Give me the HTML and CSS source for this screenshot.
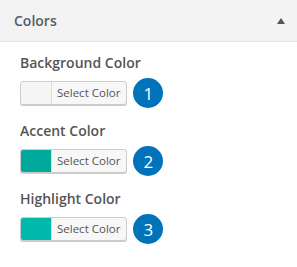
FILE: index.html
```html
<!DOCTYPE html>
<html lang="en">
<head>
  <meta charset="UTF-8">
  <title>Colors</title>
  <link rel="stylesheet" href="styles.css">
</head>
<body>
  <div class="section-title">
    <h3>Colors</h3>
    <span class="toggle"></span>
  </div>

  <ul class="controls">
    <li class="control">
      <span class="label">Background Color</span>
      <div class="picker-row">
        <button class="color-result"><span class="swatch swatch-bg"></span><span class="btn-text">Select Color</span></button>
        <span class="badge">1</span>
      </div>
    </li>
    <li class="control">
      <span class="label">Accent Color</span>
      <div class="picker-row">
        <button class="color-result"><span class="swatch swatch-accent"></span><span class="btn-text">Select Color</span></button>
        <span class="badge">2</span>
      </div>
    </li>
    <li class="control">
      <span class="label">Highlight Color</span>
      <div class="picker-row">
        <button class="color-result"><span class="swatch swatch-highlight"></span><span class="btn-text">Select Color</span></button>
        <span class="badge">3</span>
      </div>
    </li>
  </ul>
</body>
</html>
```

FILE: styles.css
```css
body {
  margin: 0;
  font-family: "Open Sans", Arial, sans-serif;
  background: #fff;
  color: #555d66;
}
.section-title {
  display: flex;
  align-items: center;
  justify-content: space-between;
  height: 41px;
  padding: 0 12px 0 14px;
  background: #f3f3f3;
  border-bottom: 1px solid #e4e4e4;
}
.section-title h3 {
  margin: 0;
  font-size: 14px;
  font-weight: 600;
  color: #555d66;
}
.toggle {
  width: 0;
  height: 0;
  border-left: 4px solid transparent;
  border-right: 4px solid transparent;
  border-bottom: 6px solid #555;
}
.controls {
  list-style: none;
  margin: 0;
  padding: 11px 20px 0;
}
.control {
  margin-bottom: 13px;
}
.label {
  display: block;
  font-size: 14px;
  font-weight: 600;
  line-height: 20px;
  margin-bottom: 5px;
  color: #555;
}
.picker-row {
  display: flex;
  align-items: center;
  gap: 6px;
}
.color-result {
  display: flex;
  align-items: stretch;
  height: 24px;
  padding: 0;
  border: 1px solid #ccc;
  border-radius: 3px;
  background: #f7f7f7;
  box-shadow: 0 1px 0 #ccc;
  overflow: hidden;
  font-family: inherit;
  cursor: pointer;
}
.swatch {
  width: 30px;
  border-right: 1px solid #ddd;
}
.swatch-bg { background: #f5f5f5; }
.swatch-accent { background: #00a99a; }
.swatch-highlight { background: #00b9aa; }
.btn-text {
  padding: 0 6px 0 5px;
  font-size: 11.5px;
  line-height: 22px;
  color: #555;
}
.badge {
  display: flex;
  align-items: center;
  justify-content: center;
  width: 30px;
  height: 30px;
  border-radius: 50%;
  background: #0073bb;
  color: #fff;
  font-size: 17px;
}
```
